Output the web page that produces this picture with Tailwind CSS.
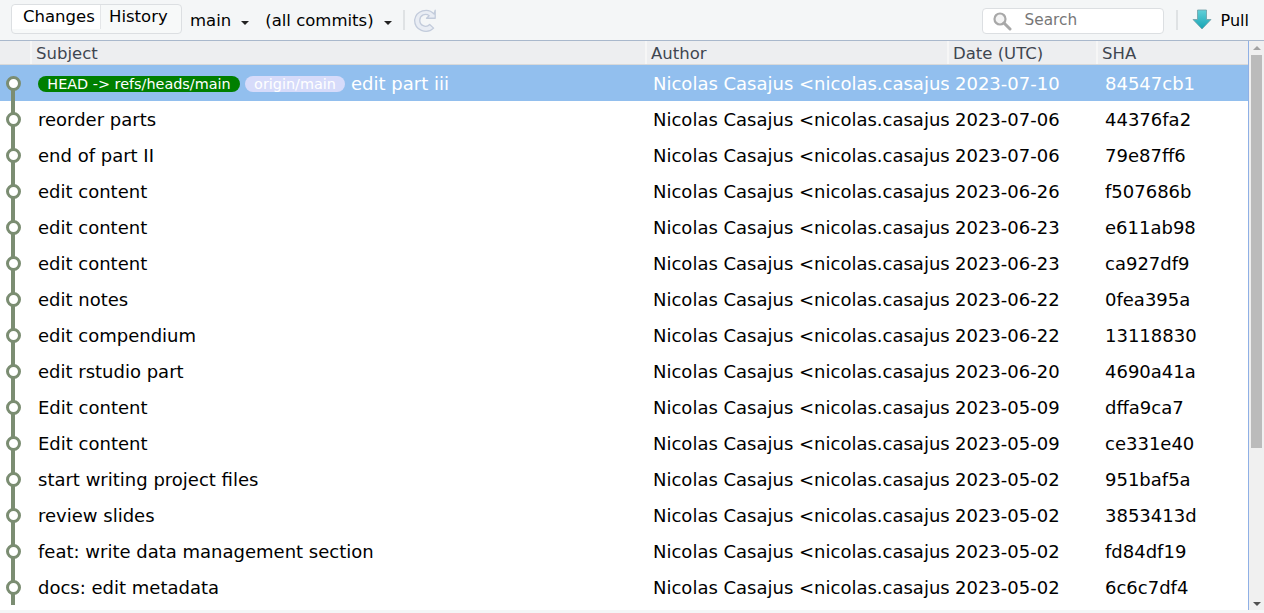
<!DOCTYPE html>
<html>
<head>
<meta charset="utf-8">
<script src="https://cdn.jsdelivr.net/npm/@tailwindcss/browser@4"></script>
</head>
<body class="w-[1264px] h-[613px] overflow-hidden bg-white font-['DejaVu_Sans',sans-serif] text-[18px] text-black">
<div class="flex flex-col h-[613px]">
  <div class="h-[41px] shrink-0 flex items-center bg-[#f4f6f7] border-b border-[#a9b8cc]">
    <div class="ml-[11px] mb-[2px] w-[171px] h-[30px] border border-[#dcdfe2] rounded-[4px] bg-[#f7f9f9] flex items-start text-[16.500px] leading-[23px]">
      <div class="h-[24px] w-[89px] bg-white border-r border-[#e4e6e8] pl-[11px] rounded-tl-[4px]">Changes</div>
      <div class="pl-[8px]">History</div>
    </div>
    <div class="ml-[8px] pt-[2px] text-[16.500px] flex items-center">main<span class="ml-[10px] mt-[3px] w-0 h-0 border-x-[4px] border-x-transparent border-t-[4px] border-t-[#222]"></span></div>
    <div class="ml-[16px] pt-[2px] text-[16.500px] flex items-center">(all commits)<span class="ml-[10px] mt-[3px] w-0 h-0 border-x-[4px] border-x-transparent border-t-[4px] border-t-[#222]"></span></div>
    <div class="ml-[11px] w-[2px] h-[20px] bg-[#dfe2e4]"></div>
    <svg class="ml-[8px]" width="26" height="26" viewBox="0 0 24 24"><path d="M19.500 6.500A10.500 10.500 0 0 0 1.500 12a10.300 10.300 0 0 0 17.500 7.500l-3.600-3.400a5.300 5.300 0 0 1-9.100-4.100 5.300 5.300 0 0 1 8.600-4l-2.400 2.400h8V3z" fill="#e9edf4" stroke="#c2cbdb" stroke-width="1.200" stroke-linejoin="round"/></svg>
    <div class="ml-auto mt-[1px] w-[182px] h-[26px] border border-[#dcdfe2] rounded-[4px] bg-white flex items-center">
      <svg class="ml-[9px]" width="20" height="20" viewBox="0 0 20 20"><circle cx="8" cy="8" r="5.500" fill="#f4f4f4" stroke="#a8a8a8" stroke-width="2.200"/><path d="M12 12l6 6" stroke="#a8a8a8" stroke-width="3" stroke-linecap="round"/></svg>
      <span class="ml-[13px] text-[15.300px] text-[#777]">Search</span>
    </div>
    <div class="ml-[12px] w-[2px] h-[20px] bg-[#dfe2e4]"></div>
    <svg class="ml-[14px]" width="20" height="22" viewBox="0 0 20 22"><defs><linearGradient id="g" x1="0" y1="0" x2="0" y2="1"><stop offset="0" stop-color="#62d0d8"/><stop offset="1" stop-color="#15a4b4"/></linearGradient></defs><path d="M5.500 1h9v9.500h4.500L10 20 1 10.500h4.500z" fill="url(#g)" stroke="#6f9ea6" stroke-width="0.800" stroke-linejoin="round"/></svg>
    <span class="ml-[9px] mr-[15px] pt-[2px] text-[16px]">Pull</span>
  </div>
  <div class="flex-1 flex min-h-0">
    <div class="w-[1249px] border-r border-[#8fb0e6] flex flex-col min-h-0">
      <div class="h-[24px] shrink-0 flex bg-[#edeef0] border-b border-[#d9d9d9] text-[#3f4650] text-[16.500px] leading-[25px]">
        <div class="w-[32px] border-r-2 border-[#f6f6f6]"></div>
        <div class="w-[615px] pl-[4px] border-r-2 border-[#f6f6f6]">Subject</div>
        <div class="w-[302px] pl-[4px] border-r-2 border-[#f6f6f6]">Author</div>
        <div class="w-[149px] pl-[4px] border-r-2 border-[#f6f6f6]">Date (UTC)</div>
        <div class="flex-1 pl-[4px]">SHA</div>
      </div>
      <div id="rows" class="flex-1 overflow-hidden">

        <div class="h-[36px] flex items-center bg-[#92bfee] text-white">
          <div class="w-[31px] h-full relative"><span class="absolute left-[11px] top-[18px] w-[4px] h-[18px] bg-[#7b8d72]"></span><span class="absolute left-[5.500px] top-[10.500px] w-[15px] h-[15px] rounded-full border-[3px] border-[#7b8d72] bg-white"></span></div>
          <div class="w-[615px] pl-[7px] flex items-center whitespace-nowrap overflow-hidden"><span class="mt-[2px] h-[16px] w-[202px] rounded-full bg-[#007f00] text-[14.400px] leading-[16px] text-center">HEAD -&gt; refs/heads/main</span><span class="mt-[2px] ml-[5px] h-[16px] w-[100px] rounded-full bg-[#d6dbfa] text-[14.400px] leading-[16px] text-center">origin/main</span><span class="ml-[6px]">edit part iii</span></div>
          <div class="w-[303px] pl-[7px] whitespace-nowrap overflow-hidden">Nicolas Casajus &lt;nicolas.casajus</div>
          <div class="w-[149px] pl-[6px]">2023-07-10</div>
          <div class="pl-[7px]">84547cb1</div>
        </div>

        <div class="h-[36px] flex items-center">
          <div class="w-[31px] h-full relative"><span class="absolute left-[11px] top-0 w-[4px] h-full bg-[#7b8d72]"></span><span class="absolute left-[5.500px] top-[10.500px] w-[15px] h-[15px] rounded-full border-[3px] border-[#7b8d72] bg-white"></span></div>
          <div class="w-[615px] pl-[7px]">reorder parts</div>
          <div class="w-[303px] pl-[7px] whitespace-nowrap overflow-hidden">Nicolas Casajus &lt;nicolas.casajus</div>
          <div class="w-[149px] pl-[6px]">2023-07-06</div>
          <div class="pl-[7px]">44376fa2</div>
        </div>
        <div class="h-[36px] flex items-center">
          <div class="w-[31px] h-full relative"><span class="absolute left-[11px] top-0 w-[4px] h-full bg-[#7b8d72]"></span><span class="absolute left-[5.500px] top-[10.500px] w-[15px] h-[15px] rounded-full border-[3px] border-[#7b8d72] bg-white"></span></div>
          <div class="w-[615px] pl-[7px]">end of part II</div>
          <div class="w-[303px] pl-[7px] whitespace-nowrap overflow-hidden">Nicolas Casajus &lt;nicolas.casajus</div>
          <div class="w-[149px] pl-[6px]">2023-07-06</div>
          <div class="pl-[7px]">79e87ff6</div>
        </div>
        <div class="h-[36px] flex items-center">
          <div class="w-[31px] h-full relative"><span class="absolute left-[11px] top-0 w-[4px] h-full bg-[#7b8d72]"></span><span class="absolute left-[5.500px] top-[10.500px] w-[15px] h-[15px] rounded-full border-[3px] border-[#7b8d72] bg-white"></span></div>
          <div class="w-[615px] pl-[7px]">edit content</div>
          <div class="w-[303px] pl-[7px] whitespace-nowrap overflow-hidden">Nicolas Casajus &lt;nicolas.casajus</div>
          <div class="w-[149px] pl-[6px]">2023-06-26</div>
          <div class="pl-[7px]">f507686b</div>
        </div>
        <div class="h-[36px] flex items-center">
          <div class="w-[31px] h-full relative"><span class="absolute left-[11px] top-0 w-[4px] h-full bg-[#7b8d72]"></span><span class="absolute left-[5.500px] top-[10.500px] w-[15px] h-[15px] rounded-full border-[3px] border-[#7b8d72] bg-white"></span></div>
          <div class="w-[615px] pl-[7px]">edit content</div>
          <div class="w-[303px] pl-[7px] whitespace-nowrap overflow-hidden">Nicolas Casajus &lt;nicolas.casajus</div>
          <div class="w-[149px] pl-[6px]">2023-06-23</div>
          <div class="pl-[7px]">e611ab98</div>
        </div>
        <div class="h-[36px] flex items-center">
          <div class="w-[31px] h-full relative"><span class="absolute left-[11px] top-0 w-[4px] h-full bg-[#7b8d72]"></span><span class="absolute left-[5.500px] top-[10.500px] w-[15px] h-[15px] rounded-full border-[3px] border-[#7b8d72] bg-white"></span></div>
          <div class="w-[615px] pl-[7px]">edit content</div>
          <div class="w-[303px] pl-[7px] whitespace-nowrap overflow-hidden">Nicolas Casajus &lt;nicolas.casajus</div>
          <div class="w-[149px] pl-[6px]">2023-06-23</div>
          <div class="pl-[7px]">ca927df9</div>
        </div>
        <div class="h-[36px] flex items-center">
          <div class="w-[31px] h-full relative"><span class="absolute left-[11px] top-0 w-[4px] h-full bg-[#7b8d72]"></span><span class="absolute left-[5.500px] top-[10.500px] w-[15px] h-[15px] rounded-full border-[3px] border-[#7b8d72] bg-white"></span></div>
          <div class="w-[615px] pl-[7px]">edit notes</div>
          <div class="w-[303px] pl-[7px] whitespace-nowrap overflow-hidden">Nicolas Casajus &lt;nicolas.casajus</div>
          <div class="w-[149px] pl-[6px]">2023-06-22</div>
          <div class="pl-[7px]">0fea395a</div>
        </div>
        <div class="h-[36px] flex items-center">
          <div class="w-[31px] h-full relative"><span class="absolute left-[11px] top-0 w-[4px] h-full bg-[#7b8d72]"></span><span class="absolute left-[5.500px] top-[10.500px] w-[15px] h-[15px] rounded-full border-[3px] border-[#7b8d72] bg-white"></span></div>
          <div class="w-[615px] pl-[7px]">edit compendium</div>
          <div class="w-[303px] pl-[7px] whitespace-nowrap overflow-hidden">Nicolas Casajus &lt;nicolas.casajus</div>
          <div class="w-[149px] pl-[6px]">2023-06-22</div>
          <div class="pl-[7px]">13118830</div>
        </div>
        <div class="h-[36px] flex items-center">
          <div class="w-[31px] h-full relative"><span class="absolute left-[11px] top-0 w-[4px] h-full bg-[#7b8d72]"></span><span class="absolute left-[5.500px] top-[10.500px] w-[15px] h-[15px] rounded-full border-[3px] border-[#7b8d72] bg-white"></span></div>
          <div class="w-[615px] pl-[7px]">edit rstudio part</div>
          <div class="w-[303px] pl-[7px] whitespace-nowrap overflow-hidden">Nicolas Casajus &lt;nicolas.casajus</div>
          <div class="w-[149px] pl-[6px]">2023-06-20</div>
          <div class="pl-[7px]">4690a41a</div>
        </div>
        <div class="h-[36px] flex items-center">
          <div class="w-[31px] h-full relative"><span class="absolute left-[11px] top-0 w-[4px] h-full bg-[#7b8d72]"></span><span class="absolute left-[5.500px] top-[10.500px] w-[15px] h-[15px] rounded-full border-[3px] border-[#7b8d72] bg-white"></span></div>
          <div class="w-[615px] pl-[7px]">Edit content</div>
          <div class="w-[303px] pl-[7px] whitespace-nowrap overflow-hidden">Nicolas Casajus &lt;nicolas.casajus</div>
          <div class="w-[149px] pl-[6px]">2023-05-09</div>
          <div class="pl-[7px]">dffa9ca7</div>
        </div>
        <div class="h-[36px] flex items-center">
          <div class="w-[31px] h-full relative"><span class="absolute left-[11px] top-0 w-[4px] h-full bg-[#7b8d72]"></span><span class="absolute left-[5.500px] top-[10.500px] w-[15px] h-[15px] rounded-full border-[3px] border-[#7b8d72] bg-white"></span></div>
          <div class="w-[615px] pl-[7px]">Edit content</div>
          <div class="w-[303px] pl-[7px] whitespace-nowrap overflow-hidden">Nicolas Casajus &lt;nicolas.casajus</div>
          <div class="w-[149px] pl-[6px]">2023-05-09</div>
          <div class="pl-[7px]">ce331e40</div>
        </div>
        <div class="h-[36px] flex items-center">
          <div class="w-[31px] h-full relative"><span class="absolute left-[11px] top-0 w-[4px] h-full bg-[#7b8d72]"></span><span class="absolute left-[5.500px] top-[10.500px] w-[15px] h-[15px] rounded-full border-[3px] border-[#7b8d72] bg-white"></span></div>
          <div class="w-[615px] pl-[7px]">start writing project files</div>
          <div class="w-[303px] pl-[7px] whitespace-nowrap overflow-hidden">Nicolas Casajus &lt;nicolas.casajus</div>
          <div class="w-[149px] pl-[6px]">2023-05-02</div>
          <div class="pl-[7px]">951baf5a</div>
        </div>
        <div class="h-[36px] flex items-center">
          <div class="w-[31px] h-full relative"><span class="absolute left-[11px] top-0 w-[4px] h-full bg-[#7b8d72]"></span><span class="absolute left-[5.500px] top-[10.500px] w-[15px] h-[15px] rounded-full border-[3px] border-[#7b8d72] bg-white"></span></div>
          <div class="w-[615px] pl-[7px]">review slides</div>
          <div class="w-[303px] pl-[7px] whitespace-nowrap overflow-hidden">Nicolas Casajus &lt;nicolas.casajus</div>
          <div class="w-[149px] pl-[6px]">2023-05-02</div>
          <div class="pl-[7px]">3853413d</div>
        </div>
        <div class="h-[36px] flex items-center">
          <div class="w-[31px] h-full relative"><span class="absolute left-[11px] top-0 w-[4px] h-full bg-[#7b8d72]"></span><span class="absolute left-[5.500px] top-[10.500px] w-[15px] h-[15px] rounded-full border-[3px] border-[#7b8d72] bg-white"></span></div>
          <div class="w-[615px] pl-[7px]">feat: write data management section</div>
          <div class="w-[303px] pl-[7px] whitespace-nowrap overflow-hidden">Nicolas Casajus &lt;nicolas.casajus</div>
          <div class="w-[149px] pl-[6px]">2023-05-02</div>
          <div class="pl-[7px]">fd84df19</div>
        </div>
        <div class="h-[36px] flex items-center">
          <div class="w-[31px] h-full relative"><span class="absolute left-[11px] top-0 w-[4px] h-full bg-[#7b8d72]"></span><span class="absolute left-[5.500px] top-[10.500px] w-[15px] h-[15px] rounded-full border-[3px] border-[#7b8d72] bg-white"></span></div>
          <div class="w-[615px] pl-[7px]">docs: edit metadata</div>
          <div class="w-[303px] pl-[7px] whitespace-nowrap overflow-hidden">Nicolas Casajus &lt;nicolas.casajus</div>
          <div class="w-[149px] pl-[6px]">2023-05-02</div>
          <div class="pl-[7px]">6c6c7df4</div>
        </div>
      </div>
    </div>
    <div class="w-[15px] bg-[#f0f0f0] flex flex-col items-center">
      <span class="mt-[5px] w-0 h-0 border-x-[4px] border-x-transparent border-b-[4px] border-b-[#a3a3a3]"></span>
      <div class="mt-[5px] w-[11px] h-[393px] bg-[#bbbbbb]"></div>
      <span class="mt-auto mb-[4px] w-0 h-0 border-x-[4px] border-x-transparent border-t-[4px] border-t-[#505050]"></span>
    </div>
  </div>
  <div class="h-[3px] shrink-0 bg-[#f4f6f7]"></div>
</div>
</body>
</html>
